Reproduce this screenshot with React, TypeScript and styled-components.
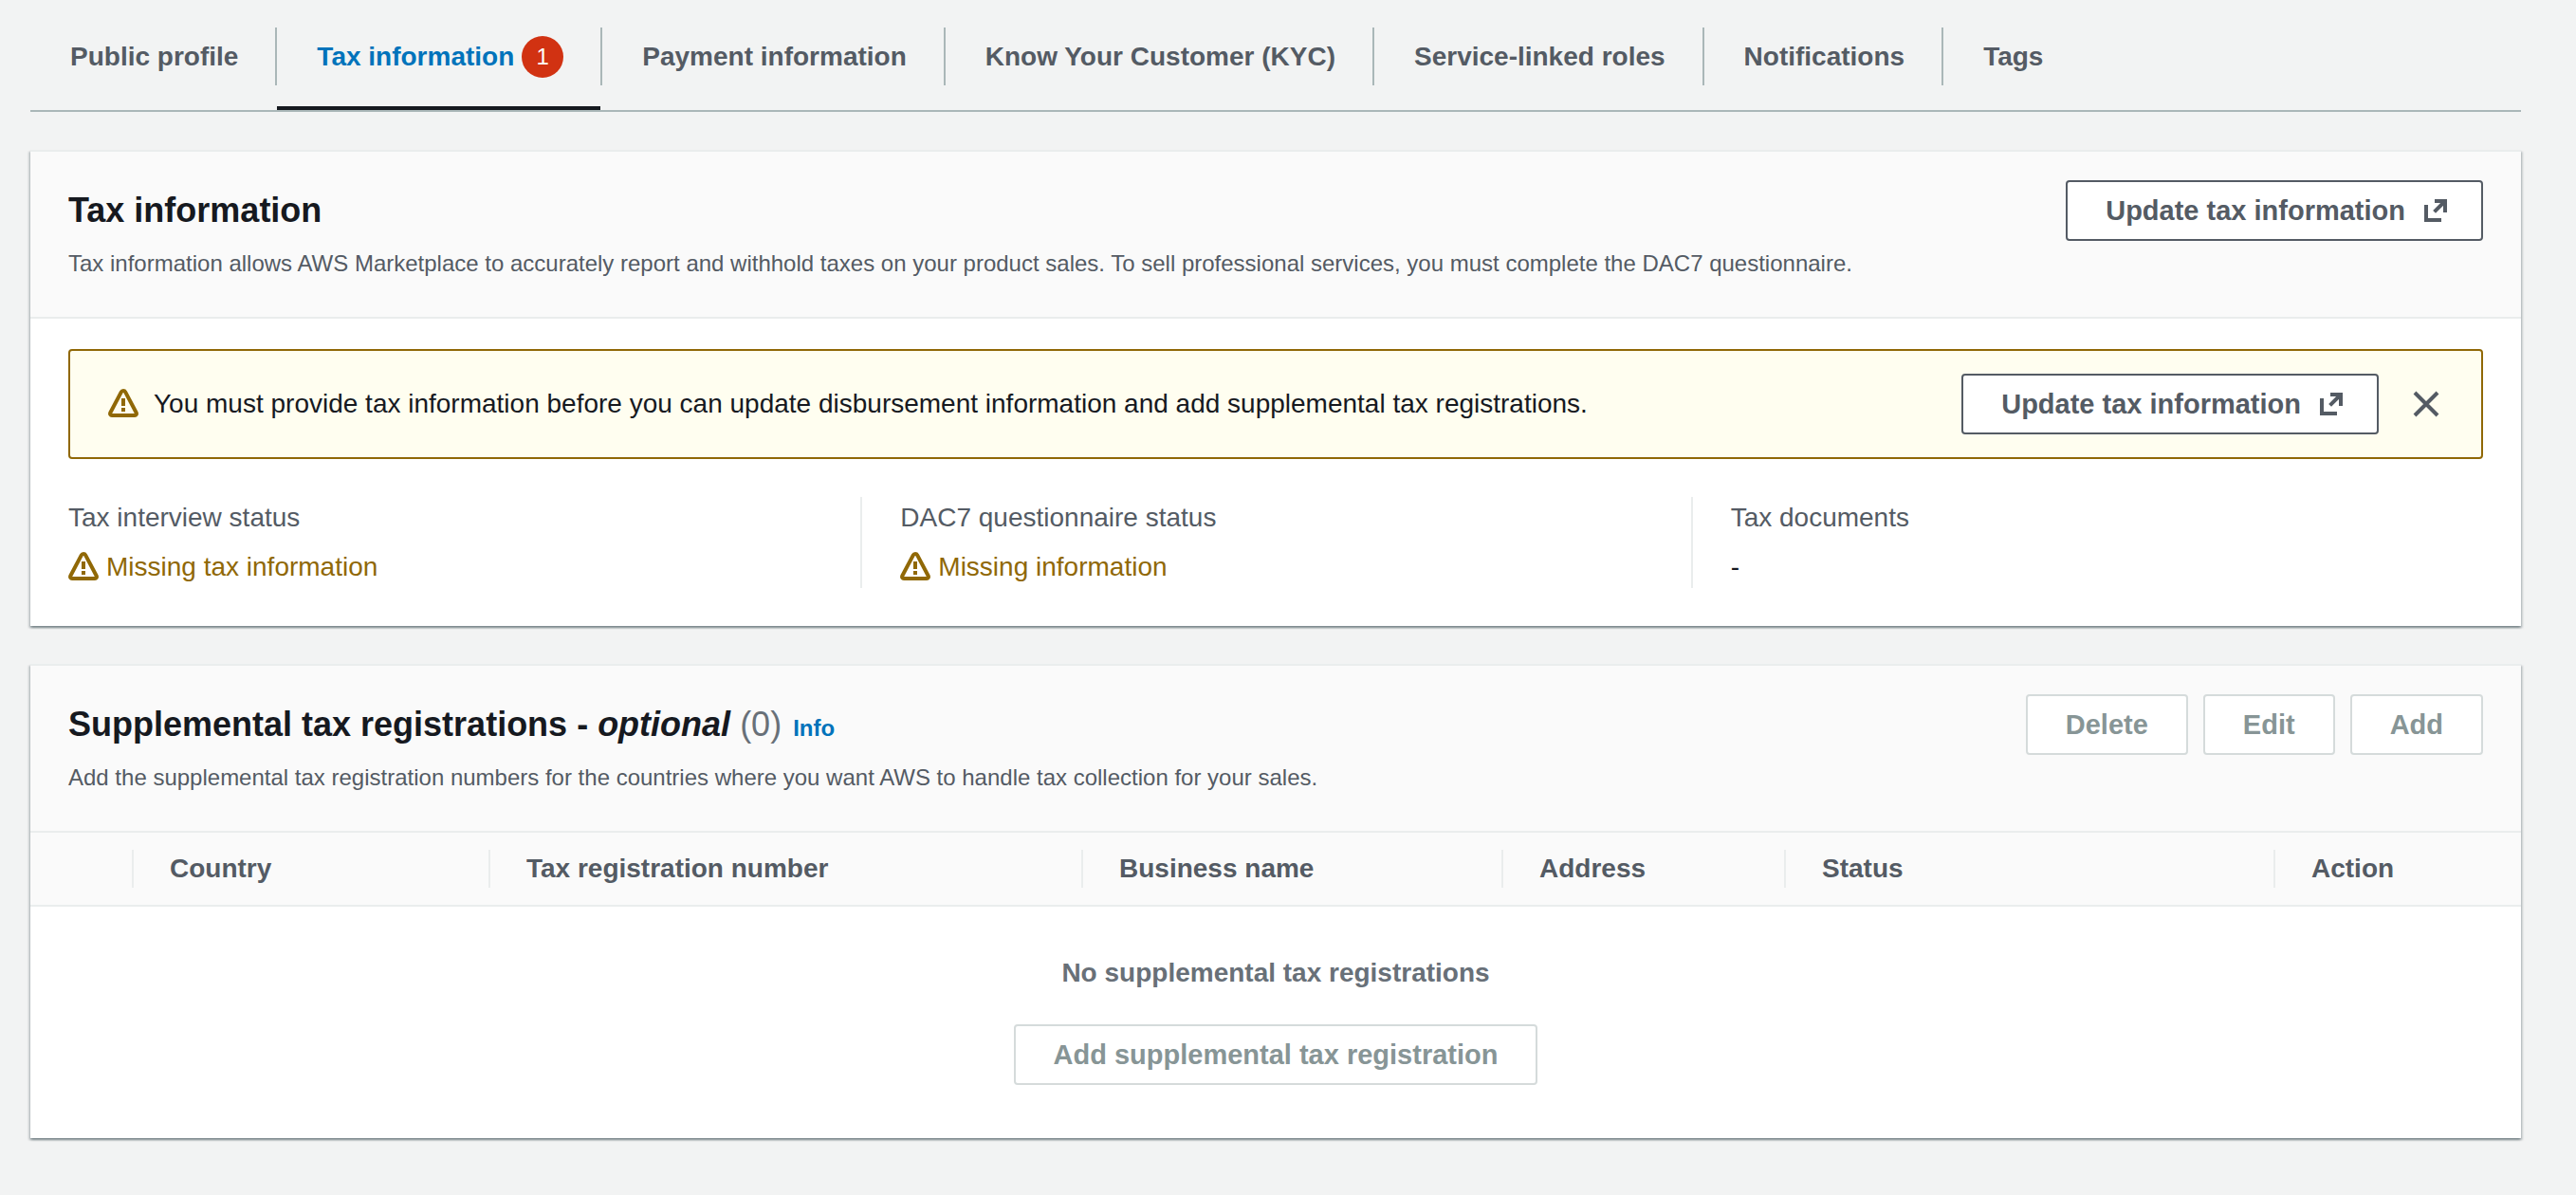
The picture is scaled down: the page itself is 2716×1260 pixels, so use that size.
import React from 'react';
import styled, { createGlobalStyle } from 'styled-components';

const colors = {
  page: '#f2f3f3',
  surface: '#ffffff',
  header: '#fafafa',
  divider: '#eaeded',
  tabLine: '#aab7b8',
  heading: '#16191f',
  text: '#545b64',
  muted: '#687078',
  link: '#0073bb',
  warning: '#906806',
  warningBg: '#fffef0',
  danger: '#d13212',
  disabledText: '#879596',
  disabledBorder: '#d5dbdb',
};

const GlobalStyle = createGlobalStyle`
  * { box-sizing: border-box; }
  body {
    margin: 0;
    background: ${colors.page};
    color: ${colors.heading};
    font-family: "Liberation Sans", Arial, Helvetica, sans-serif;
    font-size: 28px;
    line-height: 44px;
  }
  button { font-family: inherit; }
`;

const Page = styled.main`
  display: flex;
  flex-direction: column;
  gap: 40px;
  padding: 0 58px 58px 32px;
`;

const TabList = styled.ul`
  display: flex;
  margin: 0;
  padding: 0;
  list-style: none;
  border-bottom: 2px solid ${colors.tabLine};
`;

const TabItem = styled.li`
  display: flex;

  & + &::before {
    content: '';
    width: 2px;
    height: 61px;
    margin-top: 29px;
    background: ${colors.tabLine};
  }
`;

const Tab = styled.button<{ $active?: boolean }>`
  display: flex;
  align-items: center;
  gap: 8px;
  height: 116px;
  padding: 8px 39px 0 42px;
  border: 0;
  border-bottom: 4px solid ${(p) => (p.$active ? colors.heading : 'transparent')};
  background: none;
  color: ${(p) => (p.$active ? colors.link : colors.text)};
  font-size: 28px;
  font-weight: 700;
  line-height: 44px;
  white-space: nowrap;
`;

const Badge = styled.span`
  width: 44px;
  height: 44px;
  border-radius: 50%;
  background: ${colors.danger};
  color: ${colors.surface};
  font-size: 24px;
  font-weight: 400;
  text-align: center;
`;

const Card = styled.section`
  border-top: 2px solid ${colors.divider};
  background: ${colors.surface};
  box-shadow:
    0 2px 2px 0 rgba(0, 28, 36, 0.3),
    2px 2px 2px 0 rgba(0, 28, 36, 0.15),
    -2px 2px 2px 0 rgba(0, 28, 36, 0.15);
`;

const CardHeader = styled.header`
  display: flex;
  justify-content: space-between;
  align-items: flex-start;
  gap: 40px;
  padding: 30px 40px 34px;
  border-bottom: 2px solid ${colors.divider};
  background: ${colors.header};
`;

const Heading = styled.div`
  display: flex;
  flex-direction: column;
  gap: 12px;
  padding-top: 10px;
`;

const TitleRow = styled.div`
  display: flex;
  align-items: baseline;
  gap: 12px;
`;

const Title = styled.h2`
  margin: 0;
  font-size: 36px;
  font-weight: 700;
  line-height: 44px;
`;

const Counter = styled.span`
  color: ${colors.muted};
  font-weight: 400;
`;

const InfoLink = styled.a`
  color: ${colors.link};
  font-size: 24px;
  font-weight: 700;
  line-height: 28px;
  text-decoration: none;
`;

const Description = styled.p`
  margin: 0;
  color: ${colors.text};
  font-size: 24px;
  line-height: 44px;
`;

const Actions = styled.div`
  display: flex;
  gap: 16px;
`;

const Button = styled.button<{ $withIcon?: boolean }>`
  display: inline-flex;
  align-items: center;
  gap: 16px;
  padding: 0 ${(p) => (p.$withIcon ? 32 : 40)}px 0 40px;
  border: 2px solid ${colors.text};
  border-radius: 4px;
  background: ${colors.surface};
  color: ${colors.text};
  font-size: 29px;
  font-weight: 700;
  line-height: 60px;
  white-space: nowrap;

  &:disabled {
    border-color: ${colors.disabledBorder};
    color: ${colors.disabledText};
  }
`;

const CardBody = styled.div`
  display: flex;
  flex-direction: column;
  gap: 40px;
  padding: 32px 40px 40px;
`;

const Alert = styled.div`
  display: flex;
  align-items: center;
  gap: 16px;
  padding: 24px 42px 24px 40px;
  border: 2px solid ${colors.warning};
  border-radius: 4px;
  background: ${colors.warningBg};
`;

const AlertText = styled.div`
  flex: 1;
`;

const AlertActions = styled.div`
  display: flex;
  align-items: center;
  gap: 34px;
`;

const CloseButton = styled.button`
  display: flex;
  padding: 0;
  border: 0;
  background: none;
  color: ${colors.text};
`;

const Icon = styled.svg`
  flex: none;
  width: 32px;
  height: 32px;
  fill: none;
  stroke: currentColor;
  stroke-width: 2;
`;

const WarningMark = styled(Icon)`
  color: ${colors.warning};
`;

const Facts = styled.dl`
  display: grid;
  grid-template-columns: repeat(3, 1fr);
  margin: 0 -40px;
`;

const Fact = styled.div`
  display: flex;
  flex-direction: column;
  gap: 8px;
  padding: 0 40px;

  & + & {
    border-left: 2px solid ${colors.divider};
  }
`;

const FactLabel = styled.dt`
  color: ${colors.text};
`;

const FactValue = styled.dd<{ $warning?: boolean }>`
  display: flex;
  align-items: center;
  gap: 8px;
  margin: 0;
  color: ${(p) => (p.$warning ? colors.warning : colors.heading)};
`;

const Table = styled.table`
  width: 100%;
  border-collapse: collapse;
  table-layout: fixed;
`;

const HeadRow = styled.tr`
  border-bottom: 2px solid ${colors.divider};
  background: ${colors.header};
`;

const HeadCell = styled.th`
  padding: 18px 0;
  color: ${colors.text};
  text-align: left;
  white-space: nowrap;
`;

const HeadLabel = styled.div`
  height: 40px;
  padding-left: 38px;
  border-left: 2px solid ${colors.divider};
  line-height: 40px;
`;

const EmptyCell = styled.td`
  padding: 48px 40px 56px;
`;

const Empty = styled.div`
  display: flex;
  flex-direction: column;
  align-items: center;
  gap: 32px;
  color: ${colors.muted};
  font-weight: 700;
`;

const WarningIcon = () => (
  <WarningMark viewBox="0 0 16 16" aria-hidden="true">
    <path d="M8 1c-.5 0-.9.3-1.1.7L1.2 12.5c-.4.8 0 1.5.8 1.5h12c.8 0 1.200-.7.8-1.500L9.100 1.700C8.900 1.300 8.500 1 8 1Z" />
    <path d="M8 5v4M8 10v2" />
  </WarningMark>
);

const ExternalIcon = () => (
  <Icon viewBox="0 0 16 16" aria-hidden="true">
    <path d="M3 5v8h8M7.300 8.700 13 3M7.500 3H13v6" />
  </Icon>
);

const CloseIcon = () => (
  <Icon viewBox="0 0 16 16" aria-hidden="true">
    <path d="m2 2 12 12M14 2 2 14" />
  </Icon>
);

const tabs = [
  { label: 'Public profile' },
  { label: 'Tax information', badge: 1 },
  { label: 'Payment information' },
  { label: 'Know Your Customer (KYC)' },
  { label: 'Service-linked roles' },
  { label: 'Notifications' },
  { label: 'Tags' },
];

const columns = [
  { label: 'Country', width: 376 },
  { label: 'Tax registration number', width: 625 },
  { label: 'Business name', width: 443 },
  { label: 'Address', width: 298 },
  { label: 'Status', width: 516 },
  { label: 'Action', width: 261 },
];

const UpdateButton = () => (
  <Button type="button" $withIcon>
    Update tax information
    <ExternalIcon />
  </Button>
);

export default function App() {
  return (
    <>
      <GlobalStyle />
      <Page>
        <TabList role="tablist">
          {tabs.map((tab) => (
            <TabItem key={tab.label} role="presentation">
              <Tab type="button" role="tab" aria-selected={!!tab.badge} $active={!!tab.badge}>
                {tab.label}
                {tab.badge && <Badge>{tab.badge}</Badge>}
              </Tab>
            </TabItem>
          ))}
        </TabList>

        <Card>
          <CardHeader>
            <Heading>
              <Title>Tax information</Title>
              <Description>
                Tax information allows AWS Marketplace to accurately report and withhold taxes on your product
                sales. To sell professional services, you must complete the DAC7 questionnaire.
              </Description>
            </Heading>
            <UpdateButton />
          </CardHeader>
          <CardBody>
            <Alert role="alert">
              <WarningIcon />
              <AlertText>
                You must provide tax information before you can update disbursement information and add
                supplemental tax registrations.
              </AlertText>
              <AlertActions>
                <UpdateButton />
                <CloseButton type="button" aria-label="Dismiss">
                  <CloseIcon />
                </CloseButton>
              </AlertActions>
            </Alert>
            <Facts>
              <Fact>
                <FactLabel>Tax interview status</FactLabel>
                <FactValue $warning>
                  <WarningIcon />
                  Missing tax information
                </FactValue>
              </Fact>
              <Fact>
                <FactLabel>DAC7 questionnaire status</FactLabel>
                <FactValue $warning>
                  <WarningIcon />
                  Missing information
                </FactValue>
              </Fact>
              <Fact>
                <FactLabel>Tax documents</FactLabel>
                <FactValue>-</FactValue>
              </Fact>
            </Facts>
          </CardBody>
        </Card>

        <Card>
          <CardHeader>
            <Heading>
              <TitleRow>
                <Title>
                  Supplemental tax registrations - <em>optional</em> <Counter>(0)</Counter>
                </Title>
                <InfoLink href="#info">Info</InfoLink>
              </TitleRow>
              <Description>
                Add the supplemental tax registration numbers for the countries where you want AWS to handle tax
                collection for your sales.
              </Description>
            </Heading>
            <Actions>
              <Button type="button" disabled>Delete</Button>
              <Button type="button" disabled>Edit</Button>
              <Button type="button" disabled>Add</Button>
            </Actions>
          </CardHeader>
          <Table>
            <colgroup>
              <col width={107} />
              {columns.map((column) => (
                <col key={column.label} width={column.width} />
              ))}
            </colgroup>
            <thead>
              <HeadRow>
                <HeadCell aria-label="Selection" />
                {columns.map((column) => (
                  <HeadCell key={column.label} scope="col">
                    <HeadLabel>{column.label}</HeadLabel>
                  </HeadCell>
                ))}
              </HeadRow>
            </thead>
            <tbody>
              <tr>
                <EmptyCell colSpan={columns.length + 1}>
                  <Empty>
                    No supplemental tax registrations
                    <Button type="button" disabled>Add supplemental tax registration</Button>
                  </Empty>
                </EmptyCell>
              </tr>
            </tbody>
          </Table>
        </Card>
      </Page>
    </>
  );
}
